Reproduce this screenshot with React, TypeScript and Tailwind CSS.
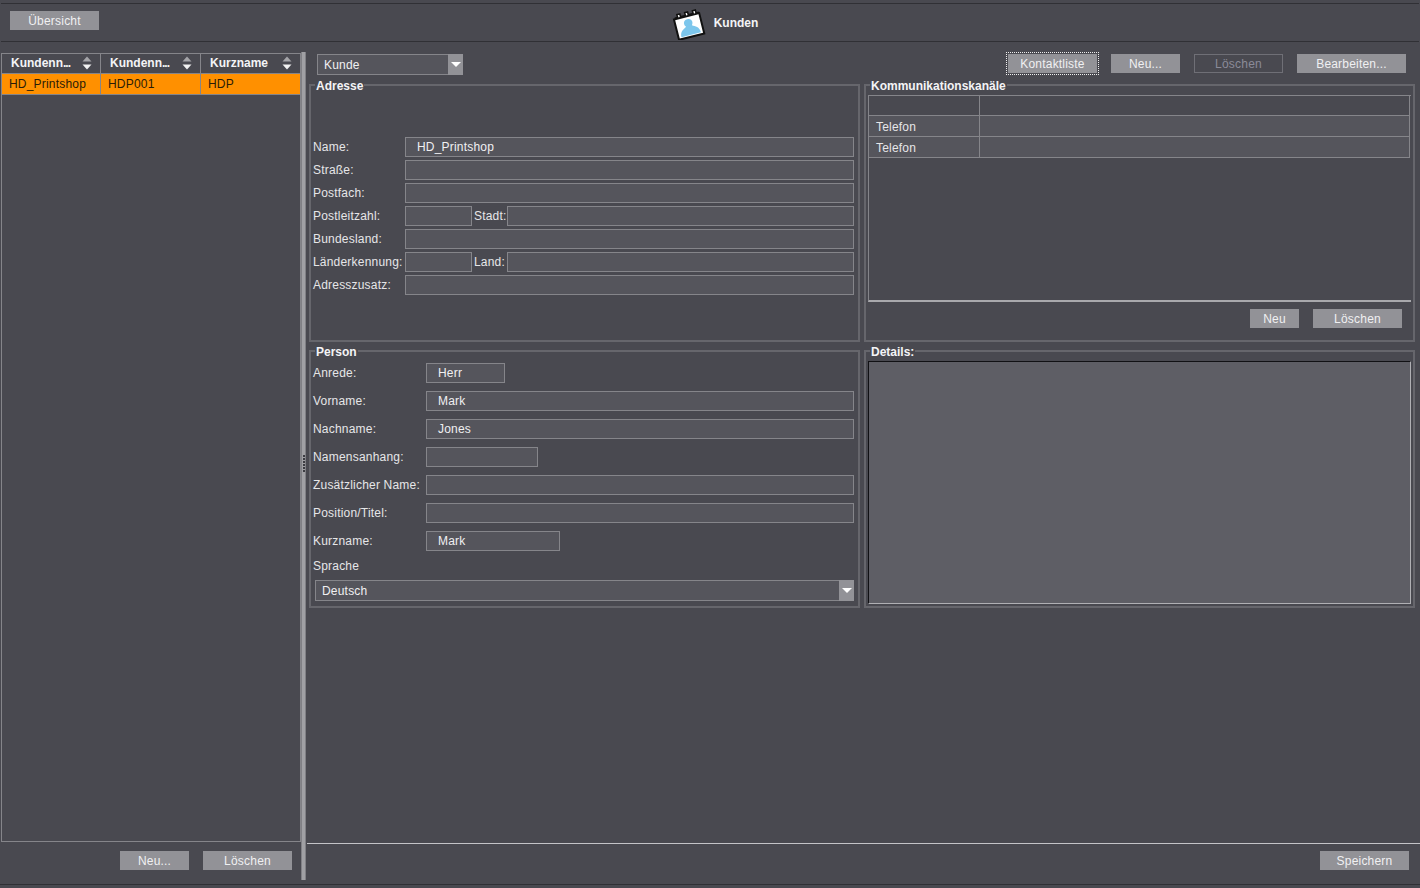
import React from "react";

const Btn = ({ children, className = "" }: { children: React.ReactNode; className?: string }) => (
  <button className={`h-[19px] bg-[#929297] text-[#f0f0f2] text-[12px] pt-[2px] leading-[17px] text-center shrink-0 ${className}`}>{children}</button>
);

const Sort = () => (
  <svg width="10" height="14" viewBox="0 0 10 14" className="shrink-0">
    <polygon points="5,0.5 9.5,5.5 0.5,5.5" fill="#a4a4a8" />
    <polygon points="0.5,8.5 9.5,8.5 5,13.5" fill="#f2f2f2" />
  </svg>
);

const Arrow = () => (
  <svg width="10" height="5" viewBox="0 0 10 5">
    <polygon points="0,0 10,0 5,5" fill="#ffffff" />
  </svg>
);

const Input = ({ value = "", className = "" }: { value?: string; className?: string }) => (
  <div className={`h-[20px] border border-[#85858a] bg-[#55555c] pl-[11px] text-[12px] leading-[19px] text-[#f0f0f2] ${className}`}>{value}</div>
);

const Group = ({ title, className = "", children }: { title: string; className?: string; children: React.ReactNode }) => (
  <fieldset className={`border-2 border-[#66666c] min-w-0 m-0 p-0 ${className}`}>
    <legend className="ml-[2px] px-[1px] pt-[2px] text-[12px] leading-[14px] font-bold tracking-normal text-[#f4f4f6]">{title}</legend>
    {children}
  </fieldset>
);

const AddrRow = ({ label, value }: { label: string; value?: string }) => (
  <div className="flex items-center h-[20px]">
    <span className="w-[92px] shrink-0 whitespace-nowrap">{label}</span>
    <Input value={value} className="flex-1" />
  </div>
);

const SplitRow = ({ label, second }: { label: string; second: string }) => (
  <div className="flex items-center h-[20px]">
    <span className="w-[92px] shrink-0 whitespace-nowrap">{label}</span>
    <Input className="w-[67px] shrink-0" />
    <span className="w-[35px] shrink-0 pl-[2px] whitespace-nowrap">{second}</span>
    <Input className="flex-1" />
  </div>
);

const PersonRow = ({ label, value, width }: { label: string; value?: string; width?: string }) => (
  <div className="flex items-center h-[20px]">
    <span className="w-[113px] shrink-0 whitespace-nowrap">{label}</span>
    <Input value={value} className={width ?? "flex-1"} />
  </div>
);

const Combo = ({ value, className = "" }: { value: string; className?: string }) => (
  <div className={`h-[21px] flex border border-[#85858a] bg-[#55555c] text-[12px] leading-[20px] text-[#f0f0f2] ${className}`}>
    <span className="flex-1 pl-[6px]">{value}</span>
    <span className="w-[15px] -my-[1px] -mr-[1px] bg-[#929297] flex items-center justify-center"><Arrow /></span>
  </div>
);

const HeadCell = ({ label, w, last }: { label: string; w: string; last?: boolean }) => (
  <div className={`${w} pl-[9px] pb-[2px] h-full flex items-center justify-between pr-[8px] ${last ? "" : "border-r border-[#85858a]"} font-bold tracking-normal text-[#f4f4f6]`}>
    {label.endsWith("...") ? (
      <span>{label.slice(0, -3)}<span className="tracking-[-1px]">...</span></span>
    ) : (
      <span>{label}</span>
    )}
    <Sort />
  </div>
);

const CommRow = ({ label }: { label: string }) => (
  <div className="flex h-[21px] border-b border-[#85858a] border-r bg-[#55555c]">
    <div className="w-[111px] shrink-0 border-r border-[#85858a] pl-[7px] leading-[22px]">{label}</div>
    <div className="flex-1" />
  </div>
);

export default function App() {
  return (
    <div className="w-[1420px] h-[888px] overflow-hidden bg-[#494950] text-[12px] tracking-[0.2px] text-[#e6e6e8] flex flex-col pt-[3px]" style={{ fontFamily: '"Liberation Sans", Arial, sans-serif' }}>
      <header className="h-[39px] shrink-0 border-y border-[#303035] mx-[1px] flex items-center pl-[9px] pb-[4px]">
        <Btn className="w-[89px]">Übersicht</Btn>
        <div className="flex-1 flex items-center justify-center gap-[8px] pt-[4px]">
          <svg width="34" height="34" viewBox="0 -1 34 34" className="-ml-[88px]">
            <g transform="rotate(-14 17 19)">
              <rect x="4" y="9" width="26" height="21" fill="#ffffff" stroke="#111111" strokeWidth="2" />
              <path d="M5 8h3v-3h3v3h5v-3h3v3h5v-3h3v3h3" fill="#ffffff" stroke="#111111" strokeWidth="1.6" />
              <path d="M7 28c0-6 4-7 7-9-2-2-2-7 3-7s5 5 3 7c3 2 7 3 7 9z" fill="#7cc6ec" />
            </g>
          </svg>
          <span className="font-bold tracking-normal text-[#f4f4f6]">Kunden</span>
        </div>
      </header>

      <div className="flex-1 flex min-h-0 pl-[1px]">
        <aside className="w-[300px] shrink-0 flex flex-col pt-[11px]">
          <div className="h-[789px] border border-[#85858a] flex flex-col">
            <div className="flex h-[20px] border-b border-[#85858a]">
              <HeadCell label="Kundenn..." w="w-[99px]" />
              <HeadCell label="Kundenn..." w="w-[100px]" />
              <HeadCell label="Kurzname" w="w-[99px]" last />
            </div>
            <div className="flex h-[21px] bg-[#ff9000] border-b border-[#85858a] text-[#2a1c08] leading-[20px]">
              <div className="w-[99px] pl-[7px] border-r border-[#85858a]">HD_Printshop</div>
              <div className="w-[100px] pl-[7px] border-r border-[#85858a]">HDP001</div>
              <div className="w-[99px] pl-[7px]">HDP</div>
            </div>
          </div>
          <div className="flex justify-end gap-[14px] pt-[9px] pr-[9px]">
            <Btn className="w-[69px]">Neu...</Btn>
            <Btn className="w-[89px]">Löschen</Btn>
          </div>
        </aside>

        <div className="w-[5px] shrink-0 mt-[10px] mb-[4px] bg-[#a0a0a4] border-x border-[#808085] flex items-center justify-end">
          <div className="h-[18px] w-[2px] -mt-[4px] bg-[repeating-linear-gradient(to_bottom,#3c3c42_0px,#3c3c42_2px,transparent_2px,transparent_3px)]" />
        </div>

        <main className="flex-1 min-w-0 flex flex-col pl-[1px]">
          <div className="h-[36px] shrink-0 flex items-start pt-[12px] pl-[10px] relative z-10">
            <Combo value="Kunde" className="w-[146px]" />
            <div className="flex-1" />
            <div className="outline-1 outline-dotted outline-[#f0f0f0] outline-offset-[1px] mr-[13px]">
              <Btn className="w-[89px]">Kontaktliste</Btn>
            </div>
            <Btn className="w-[69px] ml-[1px]">Neu...</Btn>
            <button className="h-[19px] w-[89px] ml-[14px] border border-[#6f6f76] text-[#8b8b98] text-[12px] pt-[2px] leading-[15px]">Löschen</button>
            <Btn className="w-[109px] ml-[14px] mr-[14px]">Bearbeiten...</Btn>
          </div>

          <div className="grid grid-cols-[551px_551px] gap-x-[4px] gap-y-[1px] pl-[2px] grid-rows-[265px_265px] -mt-[1px]">
            <Group title="Adresse" className="pr-[4px] pl-[2px]">
              <div className="pt-[44px] flex flex-col gap-[3px]">
                <AddrRow label="Name:" value="HD_Printshop" />
                <AddrRow label="Straße:" />
                <AddrRow label="Postfach:" />
                <SplitRow label="Postleitzahl:" second="Stadt:" />
                <AddrRow label="Bundesland:" />
                <SplitRow label="Länderkennung:" second="Land:" />
                <AddrRow label="Adresszusatz:" />
              </div>
            </Group>

            <Group title="Kommunikationskanäle" className="pl-[2px] pr-[2px]">
              <div className="h-[207px] mt-[2px] border-l border-t border-[#85858a] border-b-2 border-b-[#a8a8ac] flex flex-col">
                <div className="flex h-[20px] border-b border-r border-[#85858a] mr-[1px]">
                  <div className="w-[111px] shrink-0 border-r border-[#85858a]" />
                </div>
                <div className="mr-[1px] border-[#85858a]">
                  <CommRow label="Telefon" />
                  <CommRow label="Telefon" />
                </div>
              </div>
              <div className="flex justify-end gap-[14px] pt-[7px] pr-[9px]">
                <Btn className="w-[49px]">Neu</Btn>
                <Btn className="w-[89px]">Löschen</Btn>
              </div>
            </Group>

            <Group title="Person" className="pl-[2px] pr-[4px]">
              <div className="pt-[4px] flex flex-col gap-[8px]">
                <PersonRow label="Anrede:" value="Herr" width="w-[79px]" />
                <PersonRow label="Vorname:" value="Mark" />
                <PersonRow label="Nachname:" value="Jones" />
                <PersonRow label="Namensanhang:" width="w-[112px]" />
                <PersonRow label="Zusätzlicher Name:" />
                <PersonRow label="Position/Titel:" />
                <PersonRow label="Kurzname:" value="Mark" width="w-[134px]" />
              </div>
              <div className="h-[14px] mt-[8px] leading-[14px]">Sprache</div>
              <Combo value="Deutsch" className="w-[539px] ml-[2px] mt-[7px]" />
            </Group>

            <Group title="Details:" className="pl-[2px] pr-[2px]">
              <div className="h-[243px] mt-[2px] bg-[#5e5e65] border border-[#b0b0b4] border-t-[#111114] border-l-[#111114]" />
            </Group>
          </div>

          <div className="flex-1" />
          <div className="h-[41px] shrink-0 border-t border-[#c4c4c8] flex justify-end pt-[7px] pr-[11px]">
            <Btn className="w-[89px]">Speichern</Btn>
          </div>
        </main>
      </div>
      <div className="h-[4px] shrink-0 border-t border-[#303035]" />
    </div>
  );
}
